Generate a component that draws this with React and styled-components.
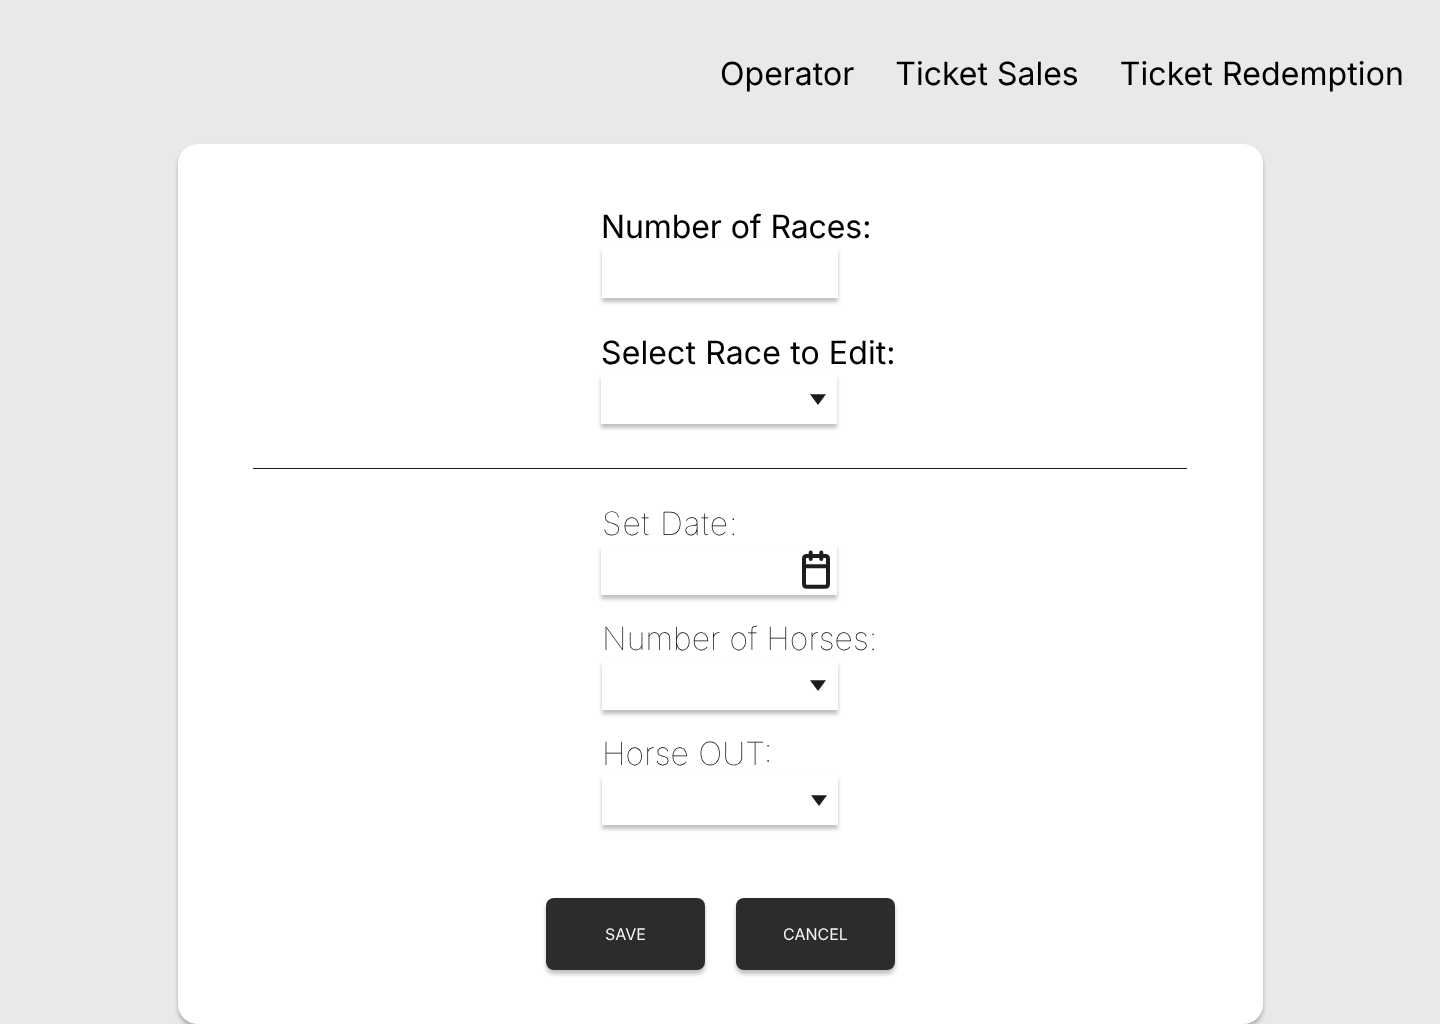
import React from "react";
import styled, { createGlobalStyle } from "styled-components";

const Global = createGlobalStyle`
  * { box-sizing: border-box; }
  body { margin: 0; background: #e9e9e9; font-family: Inter, sans-serif; overflow: hidden; text-rendering: geometricPrecision; }
`;
const Page = styled.div`
  height: 1024px;
  display: flex;
  flex-direction: column;
  overflow: hidden;
  will-change: transform;
`;
const Nav = styled.nav`
  height: 144px;
  flex: none;
  padding: 54px 36px 0 0;
  display: flex;
  justify-content: flex-end;
  gap: 41px;
`;
const NavLink = styled.a`
  font-size: 32px;
  line-height: 39px;
  letter-spacing: ${(p) => p.$track || 0}px;
  color: #000;
`;
const Card = styled.main`
  width: 1085px;
  height: 880px;
  flex: none;
  margin-left: 178px;
  background: #fff;
  border-radius: 20px;
  box-shadow: 0 4px 4px rgba(0, 0, 0, 0.25);
  display: flex;
  flex-direction: column;
`;
const Field = styled.div`
  margin: ${(p) => p.$top}px 0 0 ${(p) => p.$left || 423}px;
  display: flex;
  flex-direction: column;
`;
const Label = styled.label`
  height: 39px;
  padding-left: ${(p) => p.$indent || 0}px;
  font-size: 32px;
  line-height: 39px;
  font-weight: ${(p) => (p.$thin ? 100 : 400)};
  letter-spacing: ${(p) => p.$track || 0}px;
  font-feature-settings: "calt" 1;
  color: #000;
  white-space: nowrap;
`;
const Control = styled.div`
  width: 236px;
  height: ${(p) => (p.$tall ? 51 : 50)}px;
  margin: ${(p) => (p.$tall ? 1 : 2)}px 0 0 ${(p) => p.$shift || 0}px;
  background: #fff;
  box-shadow: 0 4px 4px rgba(0, 0, 0, 0.25);
  display: flex;
  align-items: center;
  justify-content: flex-end;
  padding-right: ${(p) => p.$pad || 11}px;
`;
const Divider = styled.hr`
  width: 934px;
  height: 1px;
  margin: 44px 0 0 75px;
  border: 0;
  background: #1d1b20;
`;
const Actions = styled.div`
  display: flex;
  gap: 31px;
  margin: 73px 0 0 368px;
`;
const Button = styled.button`
  width: 159px;
  height: 72px;
  border: 0;
  border-radius: 8px;
  background: #2c2c2c;
  color: #f5f5f5;
  font: 400 16px/16px Inter, sans-serif;
  text-rendering: geometricPrecision;
  box-shadow: 0 4px 4px rgba(0, 0, 0, 0.25);
`;
const Caret = () => (
  <svg width="16" height="11" viewBox="0 0 16 11"><path d="M0 0.3H16L8 11Z" fill="#1d1b20" /></svg>
);
const Calendar = () => (
  <svg width="30" height="40" viewBox="0 0 30 40" fill="none" stroke="#1e1e1e" strokeWidth="4" strokeLinecap="round" strokeLinejoin="round">
    <path d="M20.3 2.4V9M9.7 2.4V9M3 16.2H27M5.7 6H24.3Q27 6 27 9V33.7Q27 36.7 24.3 36.7H5.7Q3 36.7 3 33.7V9Q3 6 5.7 6Z" />
  </svg>
);

export default function App() {
  return (
    <Page>
      <Global />
      <Nav>
        <NavLink>Operator</NavLink>
        <NavLink>Ticket Sales</NavLink>
        <NavLink $track={0.1}>Ticket Redemption</NavLink>
      </Nav>
      <Card>
        <Field $top={63}><Label $track={-0.1}>Number of Races:</Label><Control $tall $shift={1} /></Field>
        <Field $top={35}><Label $track={0.12}>Select Race to Edit:</Label><Control><Caret /></Control></Field>
        <Divider />
        <Field $top={35}><Label $thin $indent={1} $track={0.85}>Set Date:</Label><Control $pad={6}><Calendar /></Control></Field>
        <Field $top={24} $left={424}><Label $thin>Number of Horses:</Label><Control $pad={12}><Caret /></Control></Field>
        <Field $top={24} $left={424}><Label $thin $track={0.1}>Horse OUT:</Label><Control><Caret /></Control></Field>
        <Actions><Button>SAVE</Button><Button>CANCEL</Button></Actions>
      </Card>
    </Page>
  );
}
